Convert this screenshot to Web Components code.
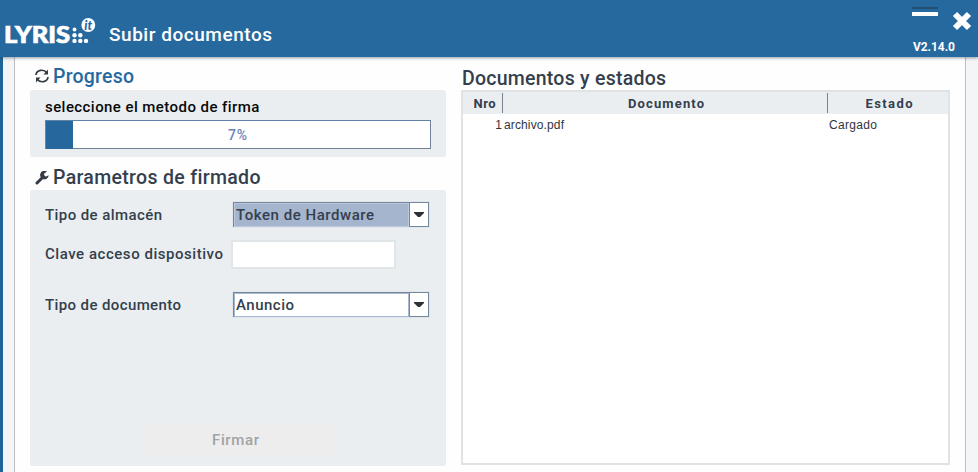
<!DOCTYPE html>
<html lang="es"><head><meta charset="utf-8"><title>Subir documentos</title>
<style>html,body{margin:0;height:100%;overflow:hidden}body{font-family:Roboto,"Liberation Sans",sans-serif;color:#343f4d}</style></head>
<body><lyris-window></lyris-window>
<script>
const define=(name,html,init)=>customElements.define(name,class extends HTMLElement{
  constructor(){super();const t=document.createElement('template');t.innerHTML=html;this.attachShadow({mode:'open'}).append(t.content.cloneNode(true));}
  connectedCallback(){if(init)init(this,this.shadowRoot);}
});

// Single line of text whose tracking is spread to fill the width given in "w".
define('tracked-text',`<style>:host{display:block;white-space:nowrap;font-weight:500}span{display:inline-block}</style><span><slot></slot></span>`,(el,root)=>{
  const s=root.querySelector('span'),w=+el.getAttribute('w'),n=el.textContent.length;
  el.style.width=w+'px';
  s.style.letterSpacing=((w-s.getBoundingClientRect().width)/(n-1)).toFixed(3)+'px';
});

define('lyris-logo',`<style>:host{display:block;width:92px;height:30px}svg{display:block}</style>
<svg width="92" height="30" viewBox="0 0 92 30" fill="#fff">
<text x="-1" y="25.500" font-family="Lato,sans-serif" font-weight="900" font-size="22.500" stroke="#fff" stroke-width=".7" textLength="66" lengthAdjust="spacingAndGlyphs">LYRIS</text>
<g><circle cx="69.500" cy="12.500" r="1.900"/><circle cx="69.500" cy="18.200" r="2.200"/><circle cx="69.500" cy="23.900" r="2.200"/><circle cx="75.300" cy="18.200" r="2.200"/><circle cx="75.300" cy="23.900" r="2.200"/><circle cx="81" cy="23.900" r="2.200"/></g>
<circle cx="83.300" cy="8" r="6.900"/>
<text x="79.300" y="12.500" fill="#26689e" font-family="Lato,sans-serif" font-style="italic" font-weight="900" font-size="12.500">it</text>
</svg>`);

define('title-bar',`<style>
:host{display:grid;grid-template-columns:92px 1fr 60px;height:57px;box-sizing:border-box;padding-left:5px;background:#26699f;color:#fff;position:relative;z-index:1;box-shadow:0 1px 3px rgba(40,65,85,.5)}
lyris-logo{margin-top:17px}.t{font-size:19px;line-height:22px;margin:24px 0 0 12px}
.r{display:grid;grid-template-columns:29px 29px;grid-template-rows:39px 18px;justify-content:start}
.m{width:26px;height:4px;border-top:2px solid #214f74;margin:7px 0 0 -6px;padding-top:3px;background:#fff content-box}
.r svg{margin:11px 0 0 5px;display:block}.v{grid-column:1/3;font-size:12px;line-height:16px;margin-left:-5px;font-weight:700}
</style><lyris-logo></lyris-logo><tracked-text class="t" w="163">Subir documentos</tracked-text>
<div class="r"><div class="m"></div><svg width="20" height="20" viewBox="0 0 20 20"><path d="M3 3 17 17M17 3 3 17" stroke="#fff" stroke-width="6"/></svg><tracked-text class="v" w="42">V2.14.0</tracked-text></div>`);

define('section-title',`<style>:host{display:flex;height:24px;align-items:center;font-size:19.5px;line-height:24px}::slotted(tracked-text){padding-top:2px}</style><slot name="icon"></slot><slot></slot>`);

define('gray-panel',`<style>:host{display:block;box-sizing:border-box;background:#eaeef0;border-radius:2px;padding:0 15px}</style><slot></slot>`);

define('load-bar',`<style>:host{display:grid;grid-template-columns:27px 1fr;box-sizing:border-box;width:386px;height:29px;border:1px solid #728298;border-top-color:#5f82a8;background:#fff}
i{background:#26689e}b{font:500 14px/28px Roboto,sans-serif;letter-spacing:.8px;color:#6e84b8;padding-left:155px}</style><i></i><b><slot></slot></b>`);

define('combo-box',`<style>:host{display:grid;grid-template-columns:1fr 19px;box-sizing:border-box;width:196px;height:25px;border:1px solid #75869f;background:#fff;box-shadow:0 0 0 1px #e0e6ea;margin-left:1px}
.v{box-sizing:border-box;border:1px solid #a6b8d2;padding-left:1px;font-size:15px;line-height:22px}
:host([active]) .v{background:#a5b5cd;border-color:#bac7dc}
.a{border-left:1px solid #75869f;padding:9px 0 0 4px}.a svg{display:block}</style>
<div class="v"><slot></slot></div><div class="a"><svg width="10" height="6"><path d="M0 0h10v1L6 5H4L0 1z" fill="#2c3137"/></svg></div>`);

define('form-row',`<style>:host{display:grid;grid-template:28px / 187px 1fr;font-size:15px;line-height:28px;height:28px;align-items:center}</style><slot name="label"></slot><slot></slot>`);

define('text-field',`<style>:host{display:block;box-sizing:border-box;width:165px;height:29px;border:2px solid #e0e5e8;background:#fff;margin-left:-1px}</style>`);

define('documents-table',`<style>
:host{display:block;box-sizing:border-box;width:489px;height:375px;border:2px solid #dfe3e5;background:#fff}
.h,.b{display:grid;grid-template-columns:39px 325px 1fr}
.h{height:22px;background:#eaeef0;font-size:13px;line-height:23px}
.h>div{display:flex;justify-content:center}.h>div+div{border-left:1px solid #78838d;height:20px;margin-top:1px;line-height:21px;padding-left:2px}
.h>div:first-child{padding-left:4px}
.b{font:12px/22px "Liberation Sans",sans-serif;color:#303442}.b tracked-text{font-weight:400}
.n{text-align:right;padding-right:0}.f{padding-left:2px}.e{padding-left:2px}.h tracked-text{font-weight:700}
</style><div class="h"><div><tracked-text w="22">Nro</tracked-text></div><div><tracked-text w="76">Documento</tracked-text></div><div><tracked-text w="47">Estado</tracked-text></div></div>
<div class="b"><div class="n">1</div><tracked-text class="f" w="60">archivo.pdf</tracked-text><tracked-text class="e" w="48">Cargado</tracked-text></div>`);

define('lyris-window',`<style>
:host{display:flex;flex-direction:column;height:472px;box-sizing:border-box;background:#f4f5f6}
.body{flex:1;display:flex;border-left:3px solid #216498;padding-left:11px}
main{box-sizing:border-box;width:952px;border:solid #bbbdbe;border-width:0 1px;background:#fefefe;display:grid;grid-template-columns:416px 489px;column-gap:15px;padding-left:15px}
.l{display:flex;flex-direction:column}.left-title{margin-top:7px}.left-title svg{width:14px;height:14px;margin:0 4px 0 5px}
.p1{height:67px;margin-top:2px;padding-top:7px}.p1 .s{font-size:15px;line-height:20px;color:#08090a;margin-bottom:3px}
.l .two{margin-top:8px}.p2{height:276px;margin-top:1px;padding-top:10px}.two svg{margin-top:2px}
.low{padding-top:2px}
.g1{margin-top:12px}.g2{margin-top:22px}
.btn{width:190px;height:32px;margin:106px auto 0;background:#ededee;display:flex;justify-content:center;color:#a1a3a4;font-size:15px;line-height:32px;padding-right:5px}
.r{padding-top:9px}.r section-title{margin-left:1px}
</style><title-bar></title-bar><div class="body"><main><div class="l">
<section-title class="left-title" style="color:#26699f"><svg slot="icon" viewBox="0 0 14 14" fill="none" stroke="#343b45" stroke-width="1.7"><path d="M1 6C1.5 1 8.5-.6 12 4M13 8C12.5 13 5.5 14.6 2 10"/><path d="M13 .5V5.500H8.500zM1 13.500V8.500H5.500z" fill="#343b45" stroke="none"/></svg><tracked-text w="81">Progreso</tracked-text></section-title>
<gray-panel class="p1"><tracked-text class="s" w="214">seleccione el metodo de firma</tracked-text><load-bar>7%</load-bar></gray-panel>
<section-title class="left-title two"><svg slot="icon" viewBox="0 0 14 14"><path d="M2 12 8.500 5.500" stroke="#343b45" stroke-width="3" stroke-linecap="round"/><path d="M12 .6A4.300 4.300 0 1 0 13.700 4.200L11 5.500 9.200 4.900 9 2.800z" fill="#343b45"/></svg><tracked-text w="207">Parametros de firmado</tracked-text></section-title>
<gray-panel class="p2">
<form-row><tracked-text class="low" slot="label" w="117">Tipo de almacén</tracked-text><combo-box active><tracked-text w="138">Token de Hardware</tracked-text></combo-box></form-row>
<form-row class="g1"><tracked-text slot="label" w="178">Clave acceso dispositivo</tracked-text><text-field></text-field></form-row>
<form-row class="g2"><tracked-text class="low" slot="label" w="136">Tipo de documento</tracked-text><combo-box><tracked-text w="58">Anuncio</tracked-text></combo-box></form-row>
<div class="btn"><tracked-text w="47">Firmar</tracked-text></div></gray-panel></div>
<div class="r"><section-title><tracked-text w="204">Documentos y estados</tracked-text></section-title><documents-table></documents-table></div>
</main></div>`);
</script></body></html>
